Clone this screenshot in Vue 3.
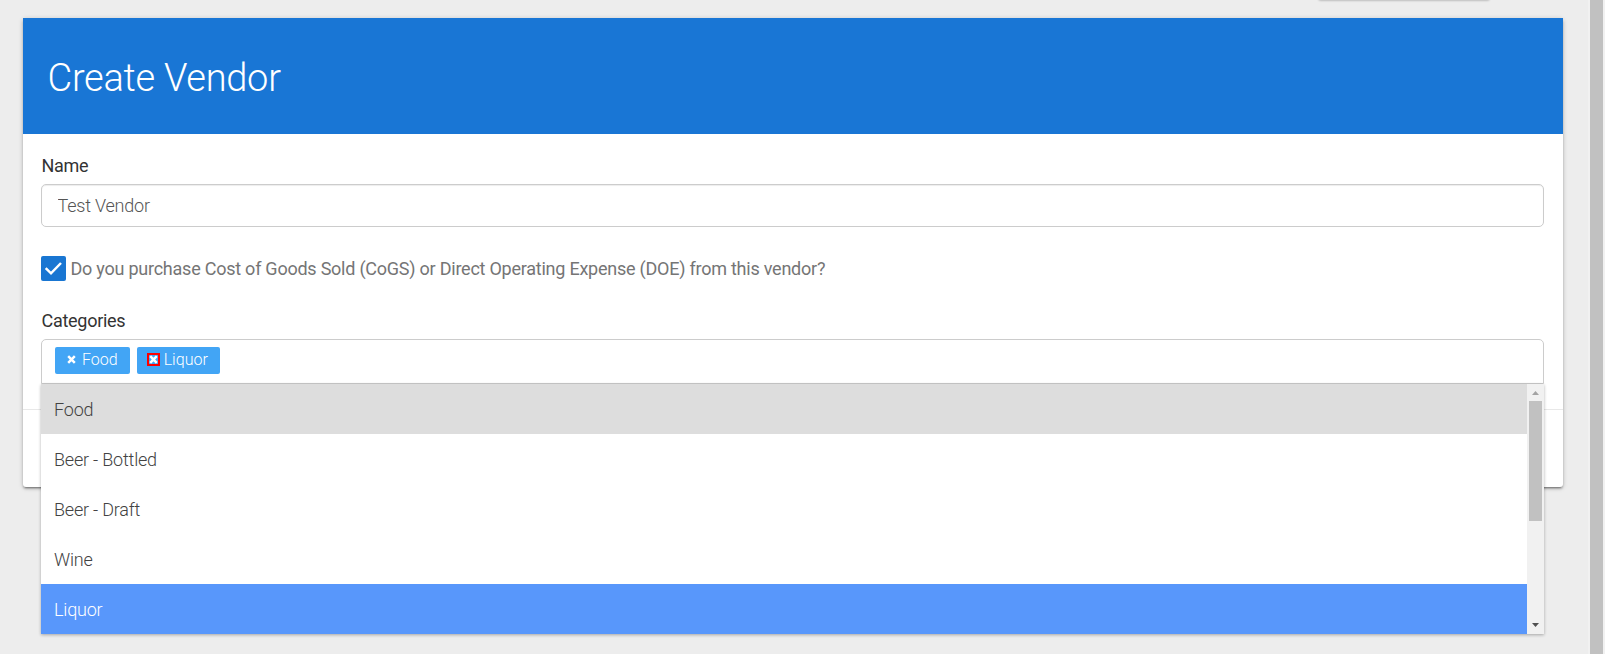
<script setup>
import { ref } from 'vue';

const name = ref('Test Vendor');
const purchases = ref(true);
const selected = ref(['Food', 'Liquor']);
const highlighted = ref('Liquor');

const categories = ['Food', 'Beer - Bottled', 'Beer - Draft', 'Wine', 'Liquor'];

const toggle = (category) => {
  if (selected.value.includes(category)) {
    selected.value = selected.value.filter((item) => item !== category);
  } else {
    selected.value.push(category);
  }
};
</script>

<template>
  <div class="page">
    <div class="toolbar-edge"></div>

    <div class="card">
      <div class="card-header">
        <h1>Create Vendor</h1>
      </div>

      <div class="card-body">
        <label class="field-label" for="name">Name</label>
        <input id="name" v-model="name" class="text-input" type="text" />

        <div class="check-row" @click="purchases = !purchases">
          <span class="checkbox" :class="{ checked: purchases }">
            <svg v-if="purchases" width="25" height="25" viewBox="0 0 25 25">
              <path d="M4.7 12.2 L10 17.3 L20 7" fill="none" stroke="#fff" stroke-width="2.5" />
            </svg>
          </span>
          <span class="check-text">Do you purchase Cost of Goods Sold (CoGS) or Direct Operating Expense (DOE) from this vendor?</span>
        </div>

        <div class="field-label">Categories</div>
        <div class="select">
          <div class="select-box">
            <span v-for="item in selected" :key="item" class="tag">
              <span class="tag-remove" :class="{ marked: item === highlighted }" @click="toggle(item)">
                <svg width="9" height="9" viewBox="0 0 9 9">
                  <path d="M1.2 1.2 L7.8 7.8 M7.8 1.2 L1.2 7.8" stroke="#fff" stroke-width="2.5" />
                </svg>
              </span>
              <span class="tag-text">{{ item }}</span>
            </span>
          </div>

          <div class="dropdown">
            <ul class="options">
              <li
                v-for="category in categories"
                :key="category"
                class="option"
                :class="{
                  selected: selected.includes(category),
                  highlighted: category === highlighted,
                }"
                @click="toggle(category)"
              >
                {{ category }}
              </li>
            </ul>
            <div class="scrollbar">
              <svg class="arrow" width="17" height="17" viewBox="0 0 17 17">
                <path d="M5 11 L8.5 7 L12 11 Z" fill="#a3a3a3" />
              </svg>
              <div class="thumb"></div>
              <svg class="arrow" width="17" height="17" viewBox="0 0 17 17">
                <path d="M5 6 L8.5 10 L12 6 Z" fill="#505050" />
              </svg>
            </div>
          </div>
        </div>
      </div>

      <div class="card-footer"></div>
    </div>

    <div class="page-scrollbar">
      <div class="page-thumb"></div>
    </div>
  </div>
</template>

<style>
body {
  margin: 0;
  background-color: #ededed;
}
</style>

<style scoped>
.page {
  position: relative;
  box-sizing: border-box;
  height: 654px;
  padding: 18px 42px 0 23px;
  overflow: hidden;
  background-color: #ededed;
  font-family: Roboto, "Liberation Sans", sans-serif;
  font-size: 18px;
  letter-spacing: -0.2px;
  color: #333;
}

/* bottom edge of the button scrolled off the top */
.toolbar-edge {
  position: absolute;
  top: -20px;
  left: 1318px;
  width: 172px;
  height: 20px;
  border-radius: 3px;
  box-shadow: 0 1px 2px rgba(0, 0, 0, 0.2);
}

.card {
  display: flex;
  flex-direction: column;
  height: 469px;
  background-color: #fff;
  border-radius: 3px;
  box-shadow: 0 3px 1px -2px rgba(0, 0, 0, 0.2), 0 2px 2px rgba(0, 0, 0, 0.22), 0 1px 5px rgba(0, 0, 0, 0.2);
}

.card-header {
  display: flex;
  align-items: center;
  height: 116px;
  padding-left: 24.5px;
  background-color: #1976d5;
}

h1 {
  margin: 0 0 -3px;
  font-size: 38px;
  font-weight: 300;
  line-height: 48px;
  letter-spacing: -0.27px;
  color: #fff;
}

.card-body {
  box-sizing: border-box;
  height: 275px;
  padding: 18px 19px 0 18px;
}

.field-label {
  display: block;
  height: 32px;
  padding-left: 0.5px;
  line-height: 28px;
  letter-spacing: -0.28px;
}

.text-input {
  display: block;
  box-sizing: border-box;
  width: 100%;
  height: 43px;
  padding: 0 15.5px;
  border: 1px solid #ccc;
  border-radius: 5px;
  outline: none;
  box-shadow: inset 0 1px 1px rgba(0, 0, 0, 0.075);
  font-family: inherit;
  font-size: 18px;
  font-weight: 300;
  letter-spacing: -0.2px;
  color: #555;
}

.check-row {
  display: flex;
  align-items: center;
  gap: 4.5px;
  height: 25px;
  margin: 29px 0 26px;
}

.checkbox {
  box-sizing: border-box;
  width: 25px;
  height: 25px;
  border: 2px solid #757575;
  border-radius: 2px;
}

.checkbox.checked {
  border: none;
  background-color: #1976d2;
}

.checkbox svg {
  display: block;
}

.check-text {
  letter-spacing: -0.238px;
  color: #757575;
}

.select {
  position: relative;
}

.select-box {
  display: flex;
  gap: 7px;
  box-sizing: border-box;
  height: 45px;
  padding: 7px 13px;
  border: 1px solid #ccc;
  border-radius: 5px 5px 0 0;
}

.tag {
  display: flex;
  align-items: center;
  box-sizing: border-box;
  height: 27px;
  padding: 0 12px 2px 10px;
  border-radius: 2px;
  background-color: #42a5f5;
  font-size: 16px;
  font-weight: 300;
  letter-spacing: 0;
  color: #fff;
}

.tag-remove {
  display: flex;
  align-items: center;
  justify-content: center;
  box-sizing: border-box;
  width: 13px;
  height: 13px;
  margin-right: 4px;
  cursor: pointer;
}

.tag-remove.marked {
  border: 2px solid #f00;
}

.tag-remove svg {
  flex: none;
}

.dropdown {
  position: absolute;
  top: 45px;
  left: 0;
  right: 0;
  display: flex;
  height: 250px;
  background-color: #fff;
  box-shadow: 0 1px 3px rgba(0, 0, 0, 0.3);
}

.options {
  flex: 1;
  margin: 0;
  padding: 0;
  list-style: none;
}

.option {
  height: 50px;
  padding-left: 13px;
  font-weight: 300;
  line-height: 51px;
  color: #424242;
  cursor: pointer;
}

.option.selected {
  background-color: #ddd;
}

.option.highlighted {
  background-color: #5897fb;
  color: #fff;
}

.scrollbar {
  display: flex;
  flex-direction: column;
  width: 17px;
  background-color: #f1f1f1;
}

.thumb {
  height: 120px;
  margin: 0 2px auto;
  background-color: #c1c1c1;
}

.card-footer {
  flex: 1;
  border-top: 1px solid #e8e8e8;
}

.page-scrollbar {
  position: absolute;
  top: 0;
  right: 0;
  bottom: 0;
  width: 17px;
  background-color: #f1f1f1;
}

.page-thumb {
  width: 13px;
  height: 100%;
  margin: 0 2px;
  background-color: #c1c1c1;
}
</style>
